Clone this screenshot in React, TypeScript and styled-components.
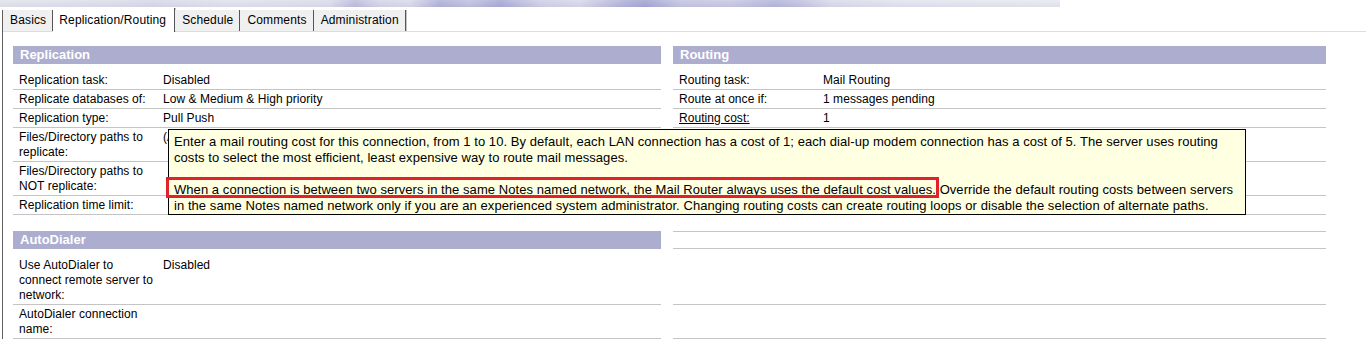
import React from "react";
import styled, { createGlobalStyle } from "styled-components";

const GlobalStyle = createGlobalStyle`
  html, body { margin: 0; padding: 0; background: #ffffff; }
  body {
    font-family: "Liberation Sans", Arial, sans-serif;
    font-size: 12px;
    color: #000000;
  }
`;

const Page = styled.div`
  position: relative;
  width: 1366px;
  height: 339px;
  overflow: hidden;
  background: #ffffff;
`;

const Banner = styled.div`
  width: 1060px;
  height: 7px;
  background:
    linear-gradient(180deg, rgba(255, 255, 255, 0.15), rgba(120, 120, 180, 0.08)),
    linear-gradient(
      90deg,
      #e3e3ec 0px,
      #dedee9 110px,
      #d8d8e8 150px,
      #e2e2ec 230px,
      #dcdcea 330px,
      #bdbddc 355px,
      #d6d6e8 380px,
      #dadaea 410px,
      #b0b0d8 440px,
      #c0c0df 470px,
      #a9a9d4 500px,
      #cfcfe6 540px,
      #d9d9ea 580px,
      #b4b4da 620px,
      #a4a4d2 645px,
      #c4c4e1 680px,
      #c8c8e3 730px,
      #b5b5da 775px,
      #c2c2e0 800px,
      #dadaea 830px,
      #e4e4ee 900px,
      #e8e8f0 1060px
    );
`;

const Frame = styled.div`
  margin: 3px 0 0 2px;
  height: 329px;
  border-left: 1px solid #5f5f5f;
`;

const TabBar = styled.div`
  display: flex;
  align-items: flex-end;
  height: 21px;
  border-bottom: 1px solid #dedede;
`;

const Tab = styled.div<{ $active?: boolean }>`
  box-sizing: border-box;
  height: ${(p) => (p.$active ? "24px" : "21px")};
  margin-bottom: ${(p) => (p.$active ? "-1px" : "0")};
  padding: ${(p) => (p.$active ? "2px 8px 1px 6px" : "0 6px 0 7px")};
  line-height: 21px;
  font-size: 12px;
  letter-spacing: 0.15px;
  white-space: nowrap;
  color: #000000;
  background: ${(p) => (p.$active ? "#ffffff" : "#f0f0f0")};
  border-right: 1px solid #555555;
  box-shadow: 1px 0 0 #c4c4c4;
`;

const Content = styled.div`
  padding: 14px 0 0 10px;
`;

const Grid = styled.div`
  display: grid;
  grid-template-columns: 648px 653px;
  column-gap: 12px;
`;

const SectionHeader = styled.div<{ $blank?: boolean; $spaced?: boolean }>`
  box-sizing: border-box;
  height: 18px;
  margin-top: ${(p) => (p.$spaced ? "16px" : "0")};
  margin-bottom: 7px;
  padding-left: 7px;
  background: ${(p) => (p.$blank ? "transparent" : "#adadd0")};
  border-top: ${(p) => (p.$blank ? "1px solid #c4c4c4" : "none")};
  border-bottom: ${(p) => (p.$blank ? "1px solid #c4c4c4" : "none")};
  color: #ffffff;
  font-size: 13px;
  font-weight: bold;
  line-height: 18px;
`;

const Row = styled.div`
  display: flex;
  padding: 2px 0 1px;
  border-bottom: 1px solid #c4c4c4;
  line-height: 15px;
  font-size: 12px;
  letter-spacing: 0.05px;
`;

const Label = styled.div<{ $link?: boolean }>`
  box-sizing: border-box;
  flex: none;
  width: 150px;
  padding: 0 8px 0 6px;
  text-decoration: ${(p) => (p.$link ? "underline" : "none")};
`;

const Value = styled.div`
  flex: 1;
  min-width: 0;
`;

const Tooltip = styled.div`
  position: absolute;
  left: 168px;
  top: 129px;
  box-sizing: border-box;
  width: 1078px;
  padding: 4px 6px 0 5px;
  background: #ffffe1;
  border: 1px solid #000000;
  font-size: 13px;
  line-height: 16px;
  letter-spacing: 0.06px;
  color: #000000;
  white-space: nowrap;
`;

const TipLine = styled.div`
  height: 16px;
`;

const Highlight = styled.span`
  position: relative;
  &::after {
    content: "";
    position: absolute;
    left: -8px;
    right: -3px;
    top: -5px;
    bottom: -1px;
    border: 3px solid #e2212b;
    pointer-events: none;
  }
`;

type Item = { label?: string; value?: string; link?: boolean };

const replication: Item[] = [
  { label: "Replication task:", value: "Disabled" },
  { label: "Replicate databases of:", value: "Low & Medium & High priority" },
  { label: "Replication type:", value: "Pull Push" },
  { label: "Files/Directory paths to replicate:", value: "(All)" },
  { label: "Files/Directory paths to NOT replicate:", value: "" },
  { label: "Replication time limit:", value: "" },
];

const routing: Item[] = [
  { label: "Routing task:", value: "Mail Routing" },
  { label: "Route at once if:", value: "1 messages pending" },
  { label: "Routing cost:", value: "1", link: true },
  {},
  {},
  {},
];

const autodialer: Item[] = [
  { label: "Use AutoDialer to connect remote server to network:", value: "Disabled" },
  { label: "AutoDialer connection name:", value: "" },
];

const tabs = ["Basics", "Replication/Routing", "Schedule", "Comments", "Administration"];

const FieldRow = ({ item }: { item: Item }) => (
  <Row>
    {item.label !== undefined && <Label $link={item.link}>{item.label}</Label>}
    {item.label !== undefined && <Value>{item.value}</Value>}
  </Row>
);

export default function App() {
  return (
    <Page>
      <GlobalStyle />
      <Banner />
      <Frame>
        <TabBar>
          {tabs.map((t) => (
            <Tab key={t} $active={t === "Replication/Routing"}>
              {t}
            </Tab>
          ))}
        </TabBar>
        <Content>
          <Grid>
            <SectionHeader>Replication</SectionHeader>
            <SectionHeader>Routing</SectionHeader>
            {replication.map((item, i) => (
              <React.Fragment key={i}>
                <FieldRow item={item} />
                <FieldRow item={routing[i]} />
              </React.Fragment>
            ))}
            <SectionHeader $spaced>AutoDialer</SectionHeader>
            <SectionHeader $spaced $blank />
            {autodialer.map((item, i) => (
              <React.Fragment key={i}>
                <FieldRow item={item} />
                <FieldRow item={{}} />
              </React.Fragment>
            ))}
          </Grid>
        </Content>
      </Frame>
      <Tooltip>
        <TipLine>
          Enter a mail routing cost for this connection, from 1 to 10. By default, each LAN connection has a cost of 1; each dial-up modem connection has a cost of 5. The server uses routing
        </TipLine>
        <TipLine>costs to select the most efficient, least expensive way to route mail messages.</TipLine>
        <TipLine />
        <TipLine>
          <Highlight>
            When a connection is between two servers in the same Notes named network, the Mail Router always uses the default cost values.
          </Highlight>{" "}
          Override the default routing costs between servers
        </TipLine>
        <TipLine>
          in the same Notes named network only if you are an experienced system administrator. Changing routing costs can create routing loops or disable the selection of alternate paths.
        </TipLine>
      </Tooltip>
    </Page>
  );
}
